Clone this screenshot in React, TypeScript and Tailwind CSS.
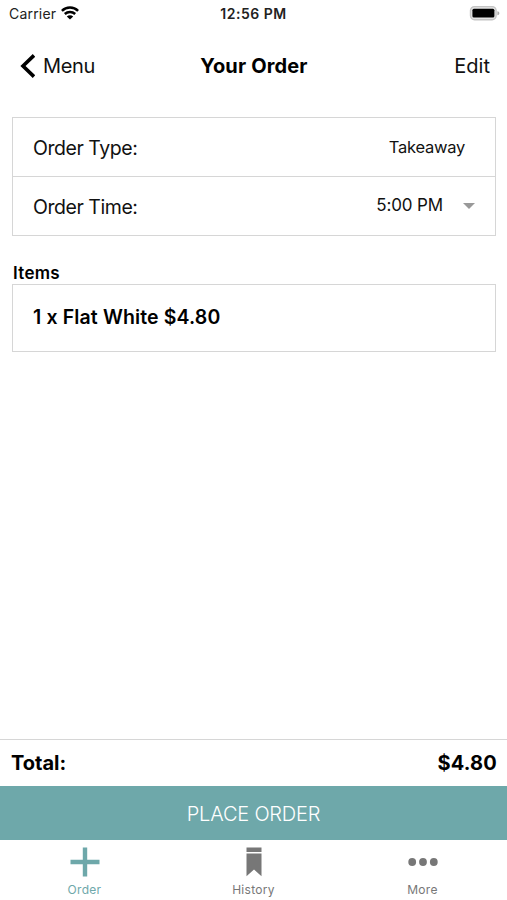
import type { ReactNode } from "react";

function StatusBar() {
  return (
    <div className="grid h-7 grid-cols-3 items-center pl-[9px] pr-[7px] text-[#222]">
      <div className="flex items-center gap-[5px]">
        <span className="pb-px text-[14px] tracking-[0.2px]">Carrier</span>
        <WifiIcon />
      </div>
      <span className="-ml-[2px] pb-px text-center text-[14px] font-semibold tracking-[0.5px]">12:56 PM</span>
      <div className="flex justify-end">
        <BatteryIcon />
      </div>
    </div>
  );
}

function WifiIcon() {
  return (
    <svg className="mb-[2px]" width="18" height="14" viewBox="0 0 18 14" fill="none" stroke="#000" strokeWidth="2.5">
      <path d="M0.9 4.8C5.4 0.4 12.6 0.4 17.1 4.8" />
      <path d="M3.8 8C6.8 5.2 11.2 5.2 14.2 8" />
      <path d="M9 13.6L5.8 10.4C7.6 8.8 10.4 8.8 12.2 10.4Z" fill="#000" stroke="none" />
    </svg>
  );
}

function BatteryIcon() {
  return (
    <svg className="mb-[2px]" width="31" height="16" viewBox="0 0 31 16">
      <rect x="1.5" y="1.6" width="25.6" height="13.2" rx="4" fill="#e4e4e4" stroke="#c4c4c4" strokeWidth="1.4" />
      <rect x="3.4" y="3.8" width="22" height="8.8" rx="1.5" fill="#000" />
      <path d="M28.4 6.2C31 7 31 9.4 28.4 10.2Z" fill="#aaa" />
    </svg>
  );
}

function Header() {
  return (
    <header className="grid h-[76px] grid-cols-3 items-center pl-5 pr-[17px] text-[20px] text-[#111]">
      <button className="flex items-center gap-2">
        <svg width="15" height="24" viewBox="0 0 15 24" fill="none" stroke="#000" strokeWidth="3.6">
          <path d="M14 1.4L3 12L14 22.6" />
        </svg>
        <span className="tracking-[-0.35px]">Menu</span>
      </button>
      <h1 className="-ml-[2px] text-center font-bold tracking-[0.15px] text-black">Your Order</h1>
      <button className="text-right">Edit</button>
    </header>
  );
}

function OrderDetails() {
  return (
    <section className="ml-3 mr-[11px] mt-[13px] border border-[#d6d6d6] text-[#111]">
      <div className="flex h-[59px] items-center justify-between border-b border-[#d6d6d6] pl-5 pr-[30px]">
        <span className="pt-1 text-[19.5px] tracking-[-0.45px]">Order Type:</span>
        <span className="pt-px text-[16.5px] tracking-[-0.25px]">Takeaway</span>
      </div>
      <div className="flex h-[58px] items-center pl-5 pr-5">
        <span className="flex-1 pt-1 text-[19.5px] tracking-[-0.45px]">Order Time:</span>
        <span className="mr-5 text-[17px] tracking-[-0.15px]">5:00 PM</span>
        <svg width="12" height="6" viewBox="0 0 12 6">
          <path d="M0 0H12L6 6Z" fill="#999" />
        </svg>
      </div>
    </section>
  );
}

function Items() {
  return (
    <section className="ml-3 mr-[11px] mt-[26px] text-black">
      <h2 className="pl-px text-[17px] font-semibold leading-[22px] tracking-[0.3px]">Items</h2>
      <div className="flex h-[68px] items-center border border-[#d6d6d6] pl-5 text-[19.5px] font-semibold tracking-[0.13px]">
        1 x Flat White $4.80
      </div>
    </section>
  );
}

function Tab({ label, active, children }: { label: string; active?: boolean; children: ReactNode }) {
  return (
    <button className={`flex flex-col items-center pt-[7px] ${active ? "text-[#6ea8aa]" : "text-[#777]"}`}>
      <svg width="30" height="30" viewBox="0 0 30 30" fill="currentColor">
        {children}
      </svg>
      <span className="mt-[5px] text-[12px] leading-4 tracking-[0.3px]">{label}</span>
    </button>
  );
}

export default function App() {
  return (
    <div className="flex h-[900px] w-full flex-col bg-white font-['Inter',sans-serif]">
      <StatusBar />
      <Header />
      <OrderDetails />
      <Items />

      <footer className="mt-auto">
        <div className="flex h-[47px] items-center justify-between border-t border-[#d6d6d6] pl-[11px] pr-[10px] text-[20px] font-bold text-black">
          <span>Total:</span>
          <span className="tracking-[0.2px]">$4.80</span>
        </div>
        <button className="block h-[54px] w-full bg-[#6ea8aa] pt-px text-[20px] font-light tracking-[-0.2px] text-white">
          PLACE ORDER
        </button>
        <nav className="grid h-[60px] grid-cols-3 items-start">
          <Tab label="Order" active>
            <path d="M12.8 0.5H17.2V12.8H29.5V17.2H17.2V29.5H12.8V17.2H0.5V12.8H12.8Z" />
          </Tab>
          <Tab label="History">
            <path d="M7.5 0.5H22.5V5H7.5ZM7.5 6.6H22.5V29.2L15 22.6L7.5 29.2Z" />
          </Tab>
          <Tab label="More">
            <circle cx="4.2" cy="15" r="3.9" />
            <circle cx="15" cy="15" r="3.9" />
            <circle cx="25.8" cy="15" r="3.9" />
          </Tab>
        </nav>
      </footer>
    </div>
  );
}
